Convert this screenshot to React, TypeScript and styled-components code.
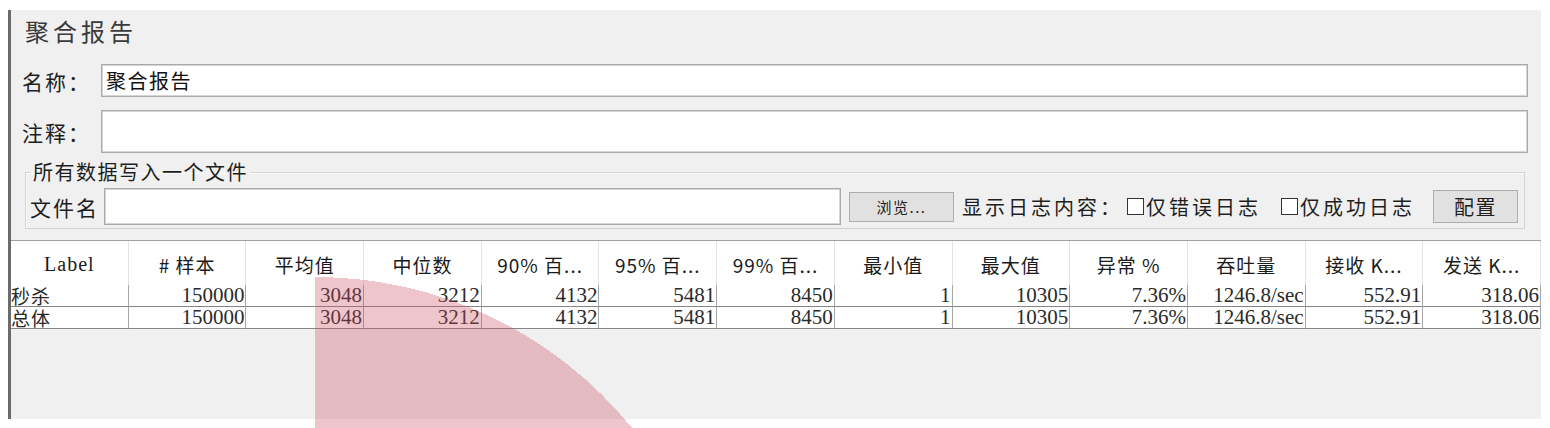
import React from 'react';
import styled, { createGlobalStyle } from 'styled-components';

const CJK = `"Noto Sans CJK SC", "Noto Sans", sans-serif`;
const SERIF = `"Liberation Serif", "Noto Sans CJK SC", serif`;

const GlobalStyle = createGlobalStyle`
  html, body { margin: 0; padding: 0; background: #ffffff; }
  body { font-family: ${CJK}; color: #1e1e1e; }
  * { box-sizing: border-box; }
`;

const Page = styled.div`
  position: relative;
  width: 1550px;
  height: 428px;
  padding: 10px 0 0 8px;
  overflow: hidden;
`;

const Panel = styled.div`
  width: 1533px;
  height: 409px;
  border-left: 3px solid #6b6b6b;
  background: #f0f0f0;
  display: flex;
  flex-direction: column;
`;

const Form = styled.div`
  display: flex;
  flex-direction: column;
  padding: 8px 13px 0 11px;
`;

const Title = styled.div`
  margin-left: 3px;
  font-size: 24px;
  line-height: 26px;
  height: 26px;
  letter-spacing: 4px;
  color: #3a3a3a;
`;

const FieldRow = styled.div<{ $top: number; $h: number }>`
  display: flex;
  align-items: center;
  margin-top: ${(p) => p.$top}px;
  height: ${(p) => p.$h}px;
`;

const FieldLabel = styled.div<{ $w: number }>`
  width: ${(p) => p.$w}px;
  flex: none;
  font-size: 21px;
  line-height: 24px;
  letter-spacing: 2px;
  white-space: nowrap;
`;

const TextBox = styled.div<{ $w?: number }>`
  ${(p) => (p.$w ? `width: ${p.$w}px; flex: none;` : 'flex: 1;')}
  align-self: stretch;
  background: #ffffff;
  border: 1px solid #a9a9a9;
  box-shadow: inset 0 0 0 1px #d6d6d6;
  padding: 0 4px;
  display: flex;
  align-items: center;
  font-size: 20px;
  letter-spacing: 1.5px;
  color: #111;
`;

const Group = styled.fieldset`
  margin: 7px 3px 0 3px;
  padding: 0 6px 3px 4px;
  border: 1px solid #d3d3d3;
  box-shadow: inset 1px 1px 0 #fafafa;
  min-width: 0;
`;

const GroupLegend = styled.legend`
  margin-left: 1px;
  padding: 0 2px;
  font-size: 20px;
  line-height: 24px;
  letter-spacing: 1.5px;
`;

const GroupRow = styled.div`
  display: flex;
  align-items: center;
  margin-top: 4px;
  height: 37px;
`;

const Button = styled.button<{ $w: number; $h: number; $fs: number; $ml: number }>`
  width: ${(p) => p.$w}px;
  height: ${(p) => p.$h}px;
  margin: 0 0 0 ${(p) => p.$ml}px;
  flex: none;
  background: #e1e1e1;
  border: 1px solid #adadad;
  font-family: ${CJK};
  font-size: ${(p) => p.$fs}px;
  letter-spacing: 1.5px;
  color: #1e1e1e;
  padding: 0;
  display: flex;
  align-items: center;
  justify-content: center;
`;

const Inline = styled.span<{ $ml: number }>`
  margin-left: ${(p) => p.$ml}px;
  font-size: 20px;
  line-height: 24px;
  letter-spacing: 3px;
  white-space: nowrap;
`;

const Check = styled.span<{ $ml: number }>`
  display: block;
  width: 17px;
  height: 17px;
  margin-left: ${(p) => p.$ml}px;
  flex: none;
  background: #ffffff;
  border: 1px solid #333333;
`;

const Spacer = styled.div`
  flex: 1;
`;

const Table = styled.div`
  margin-top: 11px;
  border-top: 1px solid #a0a0a0;
  display: grid;
  grid-template-columns: repeat(13, 1fr);
`;

const HeadCell = styled.div<{ $serif?: boolean }>`
  height: 44px;
  background: #ffffff;
  border-right: 1px solid #e3e3e3;
  display: flex;
  align-items: center;
  justify-content: center;
  padding-top: 3px;
  font-family: ${(p) => (p.$serif ? SERIF : CJK)};
  font-size: ${(p) => (p.$serif ? 20 : 19)}px;
  letter-spacing: 1px;
  white-space: nowrap;
  color: #1a1a1a;
`;

const DataCell = styled.div<{ $label?: boolean }>`
  height: 22px;
  background: #ffffff;
  border-right: 1px solid #a6a6a6;
  border-bottom: 1px solid #858585;
  font-family: ${(p) => (p.$label ? CJK : SERIF)};
  font-size: ${(p) => (p.$label ? 19 : 21)}px;
  line-height: 21px;
  text-align: ${(p) => (p.$label ? 'left' : 'right')};
  letter-spacing: ${(p) => (p.$label ? 1 : 0)}px;
  padding-right: 1px;
  white-space: nowrap;
  color: #2a2a2a;
`;

const Overlay = styled.svg`
  position: absolute;
  left: 315px;
  top: 277px;
  pointer-events: none;
`;

const headers: { text: string; serif?: boolean }[] = [
  { text: 'Label', serif: true },
  { text: '# 样本' },
  { text: '平均值' },
  { text: '中位数' },
  { text: '90% 百...' },
  { text: '95% 百...' },
  { text: '99% 百...' },
  { text: '最小值' },
  { text: '最大值' },
  { text: '异常 %' },
  { text: '吞吐量' },
  { text: '接收 K...' },
  { text: '发送 K...' },
];

const values = ['150000', '3048', '3212', '4132', '5481', '8450', '1', '10305', '7.36%', '1246.8/sec', '552.91', '318.06'];
const rows = [
  ['秒杀', ...values],
  ['总体', ...values],
];

export default function App() {
  return (
    <>
      <GlobalStyle />
      <Page>
        <Panel>
          <Form>
            <Title>聚合报告</Title>
            <FieldRow $top={20} $h={33}>
              <FieldLabel $w={79}>名称：</FieldLabel>
              <TextBox>聚合报告</TextBox>
            </FieldRow>
            <FieldRow $top={13} $h={43}>
              <FieldLabel $w={79}>注释：</FieldLabel>
              <TextBox />
            </FieldRow>
            <Group>
              <GroupLegend>所有数据写入一个文件</GroupLegend>
              <GroupRow>
                <FieldLabel $w={74}>文件名</FieldLabel>
                <TextBox $w={737} />
                <Button $w={105} $h={30} $fs={15} $ml={8}>浏览...</Button>
                <Inline $ml={8}>显示日志内容：</Inline>
                <Check role="checkbox" aria-checked="false" $ml={4} />
                <Inline $ml={2}>仅错误日志</Inline>
                <Check role="checkbox" aria-checked="false" $ml={20} />
                <Inline $ml={2}>仅成功日志</Inline>
                <Spacer />
                <Button $w={85} $h={33} $fs={20} $ml={0}>配置</Button>
              </GroupRow>
            </Group>
          </Form>
          <Table>
            {headers.map((h) => (
              <HeadCell key={h.text} $serif={h.serif}>
                {h.text}
              </HeadCell>
            ))}
            {rows.map((r) =>
              r.map((v, i) => (
                <DataCell key={r[0] + i} $label={i === 0}>
                  {v}
                </DataCell>
              ))
            )}
          </Table>
        </Panel>
        <Overlay width="320" height="151" viewBox="0 0 320 151" shapeRendering="crispEdges">
          <path d="M0 0 A408 408 0 0 1 317 151 L0 151 Z" fill="rgba(205, 80, 100, 0.33)" />
        </Overlay>
      </Page>
    </>
  );
}
